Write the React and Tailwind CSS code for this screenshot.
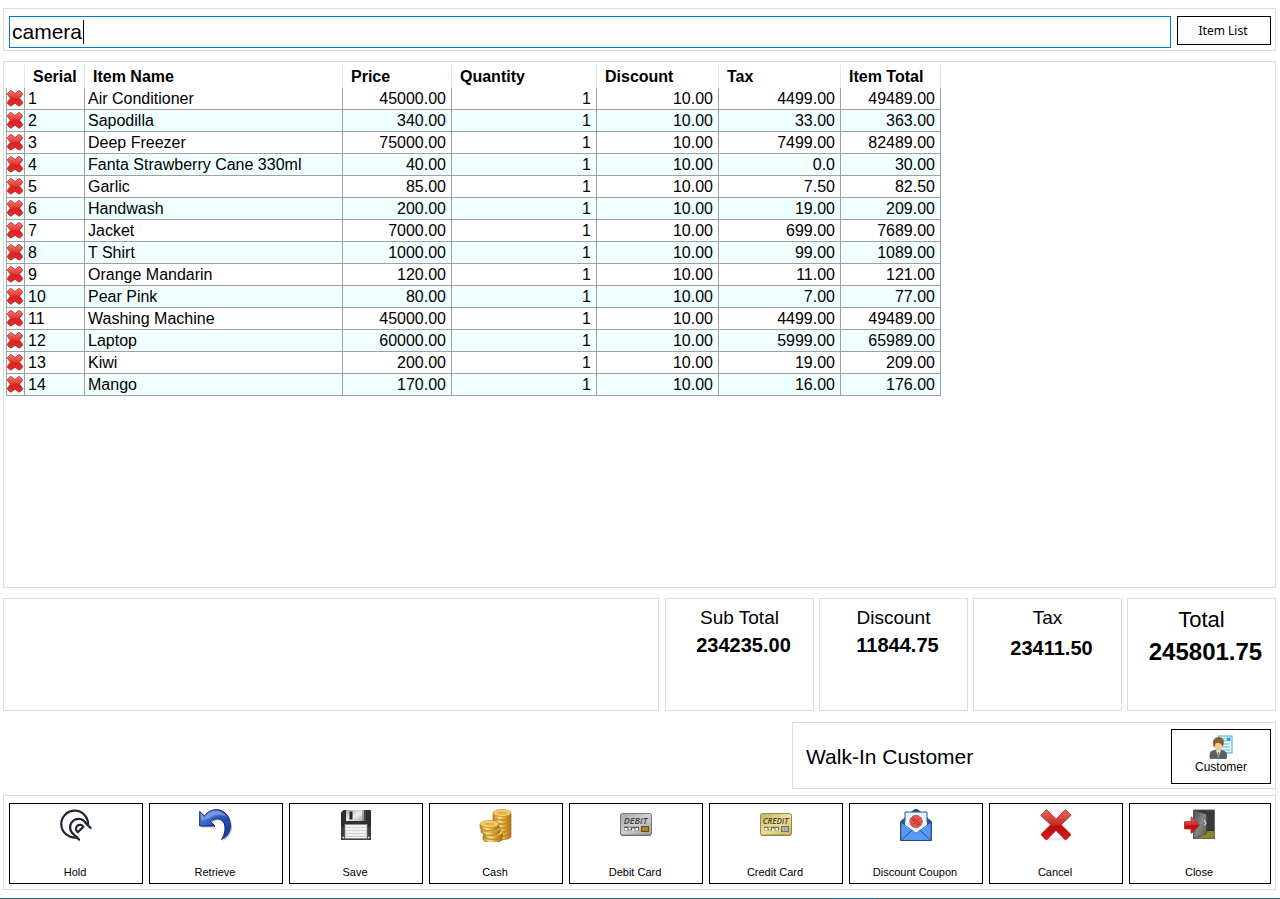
import React, { useState } from 'react';
import { clsx } from 'clsx';

const items = [
    { name: 'Air Conditioner', price: '45000.00', tax: '4499.00', total: '49489.00' },
    { name: 'Sapodilla', price: '340.00', tax: '33.00', total: '363.00' },
    { name: 'Deep Freezer', price: '75000.00', tax: '7499.00', total: '82489.00' },
    { name: 'Fanta Strawberry Cane 330ml', price: '40.00', tax: '0.0', total: '30.00' },
    { name: 'Garlic', price: '85.00', tax: '7.50', total: '82.50' },
    { name: 'Handwash', price: '200.00', tax: '19.00', total: '209.00' },
    { name: 'Jacket', price: '7000.00', tax: '699.00', total: '7689.00' },
    { name: 'T Shirt', price: '1000.00', tax: '99.00', total: '1089.00' },
    { name: 'Orange Mandarin', price: '120.00', tax: '11.00', total: '121.00' },
    { name: 'Pear Pink', price: '80.00', tax: '7.00', total: '77.00' },
    { name: 'Washing Machine', price: '45000.00', tax: '4499.00', total: '49489.00' },
    { name: 'Laptop', price: '60000.00', tax: '5999.00', total: '65989.00' },
    { name: 'Kiwi', price: '200.00', tax: '19.00', total: '209.00' },
    { name: 'Mango', price: '170.00', tax: '16.00', total: '176.00' },
];

const columns = ['Serial', 'Item Name', 'Price', 'Quantity', 'Discount', 'Tax', 'Item Total'];

const RemoveIcon = () => (
    <svg width="17" height="17" viewBox="0.5 0 17 17" aria-hidden="true">
        <path
            d="M1.2 3.2 3.6.8Q4.4.2 5.2.9L8.5 3.6 11.8.9Q12.6.2 13.4.8L15.8 3.2Q16.4 4 15.8 4.8L13 8.3 15.8 11.8Q16.5 12.6 15.9 13.4L13.6 15.8Q12.7 16.4 11.9 15.7L8.5 13.2 5.1 15.7Q4.3 16.4 3.4 15.8L1.1 13.4Q.5 12.6 1.2 11.8L4 8.3 1.2 4.8Q.6 4 1.2 3.2Z"
            fill="url(#removeRed)"
            stroke="#b0201c"
            strokeWidth="0.8"
        />
    </svg>
);

const HoldIcon = () => (
    <svg width="32" height="32" viewBox="0 0 32 32" fill="none" stroke="#20262f" strokeWidth="2.2" strokeLinecap="round" strokeLinejoin="round" aria-hidden="true">
        <path d="M28 16.5A13.4 13.4 0 1 0 17 28.3" />
        <path d="M30.6 19 25.8 14.2A8.4 8.4 0 1 0 13.4 25L19 30.6" />
        <path d="M23.4 17.8 17.8 23.2A4 4 0 1 1 23.4 17.8Z" />
    </svg>
);

const RetrieveIcon = () => (
    <svg width="34" height="34" viewBox="0 0 34 34" aria-hidden="true">
        <path d="M2 4V18.500H17L12.500 14C18 9.500 24 11 26.500 15.500C28.500 20 27.500 26 24 32C30 29 33.500 23 33 17C32.500 8 26 2 19 2C14 2 9.500 4.500 6.500 8Z" fill="#8f8f98" opacity="0.6" />
        <path
            d="M.7 2.500V17H16L11.500 12.500C17 8 22.500 9.500 25 14C27 19 26 25 22.500 30.500C28.500 27.500 31.800 22 31.300 15.500C30.700 6.500 24.500.6 17.500.6C12.500.6 8.500 3 5.300 6.800Z"
            fill="url(#arrowBlue)"
            stroke="#15266e"
            strokeWidth="1"
        />
        <path d="M2 5V11Q9 11 12 8Q20 4 28 8Q23 1.500 17 1.800Q10 2 5.500 8.500Z" fill="#9dbaf2" opacity="0.55" />
    </svg>
);

const SaveIcon = () => (
    <svg width="32" height="32" viewBox="0 0 32 32" aria-hidden="true">
        <path d="M3.500 1H30Q31 1 31 2V30Q31 31 30 31H2Q1 31 1 30V3.500Z" fill="#2c2e32" />
        <path d="M1 18H31V30Q31 31 30 31H2Q1 31 1 30Z" fill="#3b3e43" />
        <rect x="6" y="1" width="20" height="11" fill="url(#shutter)" />
        <rect x="9.500" y="2.500" width="3" height="8" fill="#232428" />
        <rect x="22.500" y="1" width="1" height="11" fill="#65676a" />
        <rect x="24" y="1" width="2" height="11" fill="#46484c" />
        <rect x="5" y="15.500" width="22" height="14" fill="#f1f1f1" stroke="#8a8c8f" strokeWidth="0.8" />
        <path d="M6 18.500H26M6 21.500H26M6 24.500H26M6 27.500H26" stroke="#d3d3d3" />
        <path d="M2.500 28.500H4M28 28.500H29.500" stroke="#f4f4f4" strokeWidth="1.5" />
    </svg>
);

const Coin = ({ x, y, rx = 9.5 }) => (
    <g transform={`translate(${x} ${y})`}>
        <path d={`M${-rx} 0V3.200A${rx} 3.600 0 0 0 ${rx} 3.200V0Z`} fill="url(#coinEdge)" stroke="#9a6712" strokeWidth="0.6" />
        <ellipse rx={rx} ry="3.500" fill="#f6cf67" stroke="#b67d1d" strokeWidth="0.6" />
        <ellipse rx={rx - 2.5} ry="2" fill="#e9b23f" stroke="#fbe7a4" strokeWidth="0.5" />
    </g>
);

const CashIcon = () => (
    <svg width="34" height="33" viewBox="0 0 34 33" aria-hidden="true">
        {[24, 20, 16, 12, 8, 4].map((y) => (
            <Coin key={y} x={23} y={y} rx={9} />
        ))}
        <Coin x={13.5} y={27} />
        <Coin x={14} y={23.500} />
        <Coin x={11.5} y={19.500} />
        <Coin x={10.5} y={15} />
    </svg>
);

// Shared by the debit and credit buttons, only the metal differs
const CardIcon = ({ text, gold }) => (
    <svg width="32" height="32" viewBox="0 0 32 32" aria-hidden="true">
        <rect x="0.500" y="5" width="31" height="22" rx="2" fill={gold ? '#8b7c37' : '#66696b'} />
        <rect x="0.500" y="4.500" width="31" height="21.500" rx="2" fill={gold ? 'url(#cardGold)' : 'url(#cardSilver)'} stroke={gold ? '#99894a' : '#77797b'} />
        <text x="15.500" y="15" textAnchor="middle" fontSize={gold ? 8 : 9} fontWeight="600" fontStyle="italic" fontFamily="Open Sans, sans-serif" fill={gold ? '#4f411c' : '#36443a'}>
            {text}
        </text>
        <path d="M4 19.500H19" stroke={gold ? '#7e733f' : '#5c5e60'} strokeWidth="3.600" />
        <path d="M4.500 20H7.500M8.500 19.500H11M12 20.500H14.500M15.500 20H18" stroke="#f7f7f1" strokeWidth="1.800" />
        <rect x="21.500" y="17.500" width="7" height="5" fill={gold ? '#a5a6a5' : '#a9771f'} stroke={gold ? '#77746b' : '#714c12'} />
        <path d="M23.500 18.500V21.500M26.500 18.500V21.500" stroke={gold ? '#c6c7c7' : '#cf9c40'} strokeWidth="0.8" />
    </svg>
);

const CouponIcon = () => (
    <svg width="32" height="33" viewBox="0 0 32 33" aria-hidden="true">
        <path d="M.7 12.500 14 1Q16 0 18 1L31.300 12.500V31.500H.7Z" fill="#2e548f" stroke="#25436f" />
        <path d="M5 3H27V20L16 27 5 20Z" fill="#e4f5fc" stroke="#315987" />
        <path d="M.9 13 14 22.500Q16 24 18 22.500L31.100 13V31.500H.9Z" fill="#549afa" stroke="#294b7a" />
        <path d="M1 31.500 12 21.500M31 31.500 20 21.500" stroke="#294b7a" />
        <path d="M5 12.500V16L14.500 22.800Q16 23.800 17.500 22.800L27 16V12.500Z" fill="#e4f5fc" />
        <circle cx="16" cy="12.500" r="6.200" fill="#f15445" stroke="#a93b3a" strokeDasharray="2 1" />
        <path d="M13 15.500 19 9.500" stroke="#68313a" strokeWidth="0.9" />
        <circle cx="13.800" cy="10.500" r="1.300" fill="none" stroke="#68313a" strokeWidth="0.8" />
        <circle cx="18.300" cy="14.600" r="1.300" fill="none" stroke="#68313a" strokeWidth="0.8" />
    </svg>
);

const CancelIcon = () => (
    <svg width="32" height="32" viewBox="0 0 32 32" aria-hidden="true">
        <ellipse cx="16" cy="30" rx="14" ry="1.500" fill="#d9d9d9" opacity="0.6" />
        <path d="M1.200 6 5.700 1.300Q6.500.7 7.300 1.300L16 10.200 24.700 1.300Q25.500.7 26.300 1.300L30.500 5.500Q31 6.300 30.400 7L21.200 15.800 30.500 25Q31 25.700 30.400 26.400L26.300 30.500Q25.500 31 24.700 30.400L16 21.500 7.300 30.400Q6.500 31 5.700 30.400L1.400 26.200Q1 25.500 1.500 24.800L10.700 15.800 1.400 7.200Q.8 6.600 1.200 6Z" fill="url(#cancelRed)" stroke="#a82622" strokeWidth="0.8" />
    </svg>
);

const CloseIcon = () => (
    <svg width="32" height="32" viewBox="0 0 32 32" aria-hidden="true">
        <rect x="9.500" y="1" width="21" height="28.500" fill="#292b2b" stroke="#636565" />
        <path d="M22 2H30V21H22Z" fill="#3a3c3c" />
        <path d="M10 29 22 22H30V29Z" fill="#858626" />
        <path d="M10 1.500 22.500 5V24.500L10 29.500Z" fill="url(#doorGrey)" stroke="#484b4b" strokeWidth="0.7" />
        <path d="M20 11 22 14 20.500 16.500" fill="none" stroke="#d9d9d9" strokeWidth="1.200" />
        <path d="M1 12.500H7V8.500Q7 7.500 8 8.300L15 15.500Q15.500 16.200 15 16.900L8 24Q7 24.700 7 23.700V20H1Q.5 20 .5 19.500V13Q.5 12.500 1 12.500Z" fill="url(#cancelRed)" stroke="#ac2b29" strokeWidth="0.8" />
    </svg>
);

const CustomerIcon = () => (
    <svg width="24" height="24" viewBox="0 0 24 24" aria-hidden="true">
        <rect x="9.500" y="1" width="13.500" height="17" fill="#e9f8fd" stroke="#4da5c6" />
        <path d="M12 3.500H16M12 6H17M12 9H21M12 12H21M12 15H21" stroke="#8fd0e6" strokeWidth="1.300" />
        <rect x="17.500" y="2.500" width="4" height="3.500" fill="#1eb0e0" />
        <path d="M1 23.500V19Q1 16 5 15.500L9 14.500 13 15.500Q17 16 17.500 19V23.500Z" fill="#5b6066" stroke="#3f4347" strokeWidth="0.6" />
        <path d="M7 15 9.500 23 12 15Z" fill="#dfe3e6" />
        <path d="M9.500 16.500 8.700 18 9.500 23 10.300 18Z" fill="#86793d" />
        <path d="M5.500 8Q5.500 15.500 9.500 16Q13.500 15 13.500 8Q9 4.500 5.500 8Z" fill="#f3cb88" />
        <path d="M4.500 10Q3 3 9 2.500Q14.500 2 14.500 7Q14.500 9 13.700 11Q13 8 10 7.500Q7 7.500 6 8.500Q6 11 5.300 12Z" fill="#85602c" stroke="#62431b" strokeWidth="0.5" />
    </svg>
);

// Gradients used by the icons above
const IconDefs = () => (
    <svg width="0" height="0" className="absolute" aria-hidden="true">
        <defs>
            <linearGradient id="removeRed" x1="0" y1="0" x2="0" y2="1">
                <stop offset="0" stopColor="#f27a70" />
                <stop offset="0.45" stopColor="#e23a35" />
                <stop offset="0.55" stopColor="#dc1f22" />
                <stop offset="1" stopColor="#e8302c" />
            </linearGradient>
            <linearGradient id="arrowBlue" x1="0" y1="0" x2="0.8" y2="1">
                <stop offset="0" stopColor="#6d95e8" />
                <stop offset="0.5" stopColor="#2a52bb" />
                <stop offset="1" stopColor="#1c3ba0" />
            </linearGradient>
            <linearGradient id="shutter" x1="0" y1="0" x2="1" y2="1">
                <stop offset="0" stopColor="#a7a9ac" />
                <stop offset="0.5" stopColor="#eeeeee" />
                <stop offset="1" stopColor="#9c9ea1" />
            </linearGradient>
            <linearGradient id="coinEdge">
                <stop offset="0" stopColor="#c18721" />
                <stop offset="0.35" stopColor="#fbe08b" />
                <stop offset="0.65" stopColor="#dfa433" />
                <stop offset="1" stopColor="#a66d14" />
            </linearGradient>
            <linearGradient id="cardSilver" x1="0" y1="0" x2="1" y2="1">
                <stop offset="0" stopColor="#a5a7a8" />
                <stop offset="0.5" stopColor="#cfd0d0" />
                <stop offset="1" stopColor="#989a9b" />
            </linearGradient>
            <linearGradient id="cardGold" x1="0" y1="0" x2="1" y2="1">
                <stop offset="0" stopColor="#c3b15d" />
                <stop offset="0.5" stopColor="#ebdf9c" />
                <stop offset="1" stopColor="#c5b564" />
            </linearGradient>
            <linearGradient id="cancelRed" x1="0" y1="0" x2="0" y2="1">
                <stop offset="0" stopColor="#e4665f" />
                <stop offset="0.48" stopColor="#c92e2b" />
                <stop offset="0.55" stopColor="#b90d10" />
                <stop offset="1" stopColor="#dd1a1a" />
            </linearGradient>
            <linearGradient id="doorGrey" x1="0" y1="0" x2="1" y2="1">
                <stop offset="0" stopColor="#4d5050" />
                <stop offset="0.5" stopColor="#848787" />
                <stop offset="1" stopColor="#55584f" />
            </linearGradient>
        </defs>
    </svg>
);

const actions = [
    { label: 'Hold', icon: <HoldIcon /> },
    { label: 'Retrieve', icon: <RetrieveIcon /> },
    { label: 'Save', icon: <SaveIcon /> },
    { label: 'Cash', icon: <CashIcon /> },
    { label: 'Debit Card', icon: <CardIcon text="DEBIT" /> },
    { label: 'Credit Card', icon: <CardIcon text="CREDIT" gold /> },
    { label: 'Discount Coupon', icon: <CouponIcon /> },
    { label: 'Cancel', icon: <CancelIcon /> },
    { label: 'Close', icon: <CloseIcon /> },
];

const Panel = ({ className, children }) => (
    <section className={clsx('border border-[#dcdcdc]', className)}>{children}</section>
);

const Summary = ({ label, value, labelClass = 'text-[19px] leading-7', valueClass = 'text-xl leading-[26px]' }) => (
    <Panel className="flex h-[113px] flex-col items-center pt-[5px]">
        <h2 className={labelClass}>{label}</h2>
        <p className={clsx('pl-2 font-bold', valueClass)}>{value}</p>
    </Panel>
);

const ItemTable = () => {
    const cell = 'border-r border-b border-[#a0a0a0]';
    const textCell = clsx(cell, 'pt-px pl-[3px] text-left');
    const numberCell = clsx(cell, 'pt-px pr-[5px] text-right');

    return (
        <table className="w-[935px] table-fixed border-separate border-spacing-0 text-base leading-5">
            <colgroup>
                <col className="w-[19px]" />
                <col className="w-[60px]" />
                <col className="w-[258px]" />
                <col className="w-[109px]" />
                <col className="w-[145px]" />
                <col className="w-[122px]" />
                <col className="w-[122px]" />
                <col className="w-[100px]" />
            </colgroup>
            <thead>
                <tr className="h-[23px] text-left">
                    <td className="border-r border-[#e5e5e5]" />
                    {columns.map((column) => (
                        <th key={column} className="border-r border-[#e5e5e5] pl-2 font-bold">{column}</th>
                    ))}
                </tr>
            </thead>
            <tbody>
                {items.map((item, index) => (
                    <tr key={item.name} className="h-[22px] even:bg-[#f0ffff]">
                        <td className={clsx(cell, 'border-l')}>
                            <button type="button" aria-label={`Remove ${item.name}`} className="block">
                                <RemoveIcon />
                            </button>
                        </td>
                        <td className={textCell}>{index + 1}</td>
                        <td className={textCell}>{item.name}</td>
                        <td className={numberCell}>{item.price}</td>
                        <td className={numberCell}>1</td>
                        <td className={numberCell}>10.00</td>
                        <td className={numberCell}>{item.tax}</td>
                        <td className={numberCell}>{item.total}</td>
                    </tr>
                ))}
            </tbody>
        </table>
    );
};

const App = () => {
    const [search, setSearch] = useState('camera');

    return (
        <div className="flex min-h-screen flex-col bg-white pt-2 font-['Liberation_Sans',Arial,sans-serif] text-black">
            <IconDefs />
            <main className="flex flex-1 flex-col pr-1 pb-2 pl-[3px]">
                <Panel className="flex items-start gap-1.5 pt-[7px] pr-1 pb-[2px] pl-[5px]">
                    <div className="relative flex-1">
                        <input
                            type="text"
                            aria-label="Search item"
                            value={search}
                            onChange={(e) => setSearch(e.target.value)}
                            className="block h-8 w-full border border-[#0078d7] px-[2px] text-[21px] caret-transparent outline-none"
                        />
                        {search === 'camera' && <span className="absolute top-1 left-[74px] h-6 w-px bg-black" />}
                    </div>
                    <button type="button" className="h-[29px] w-[94px] border border-black pr-0.5 font-['Noto_Sans',sans-serif] text-xs">
                        Item List
                    </button>
                </Panel>

                <Panel className="mt-2.5 flex-1 pt-[3px] pl-[2px]">
                    <ItemTable />
                </Panel>

                <div className="mt-2.5 grid grid-cols-[1fr_149px_149px_149px_149px] gap-[5px]">
                    <Panel className="mr-px" />
                    <Summary label="Sub Total" value="234235.00" />
                    <Summary label="Discount" value="11844.75" />
                    <Summary label="Tax" value="23411.50" valueClass="text-xl leading-8" />
                    <Summary label="Total" value="245801.75" labelClass="text-[22px] leading-8" valueClass="text-2xl leading-8" />
                </div>

                <Panel className="mt-[11px] ml-auto flex w-[484px] items-center justify-between pt-1.5 pr-1 pb-1 pl-[13px]">
                    <p className="text-[21px]">Walk-In Customer</p>
                    <button type="button" className="flex h-[55px] w-[100px] flex-col items-center border border-black pt-[5px] text-xs">
                        <CustomerIcon />
                        Customer
                    </button>
                </Panel>

                <Panel className="mt-1.5 grid grid-cols-[repeat(8,134fr)_142fr] gap-1.5 pt-[7px] pr-1 pb-[5px] pl-[5px]">
                    {actions.map(({ label, icon }) => (
                        <button key={label} type="button" className="flex h-[81px] flex-col items-center justify-between border border-black pt-[5px] pr-[2px] pb-[3px] text-[11px] leading-4">
                            <span className="pl-0.5">{icon}</span>
                            {label}
                        </button>
                    ))}
                </Panel>
            </main>
            <div className="h-px bg-[#2b5570]">
                <div className="ml-[65%] h-px w-11 bg-[#1b62ae]" />
            </div>
        </div>
    );
};

export default App;
